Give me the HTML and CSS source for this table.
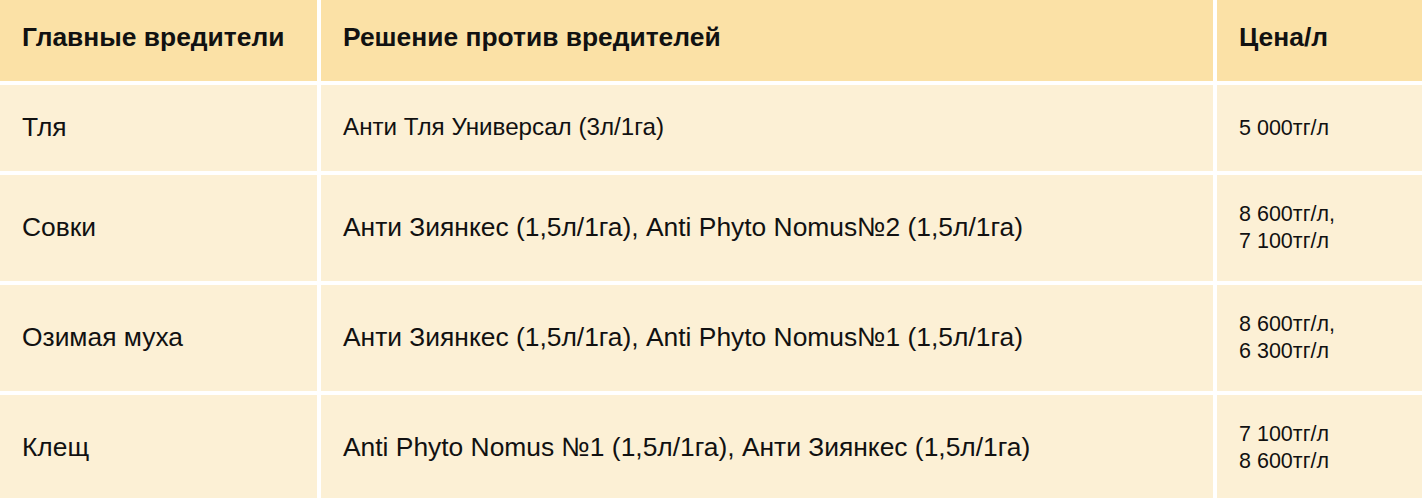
FILE: index.html
```html
<!DOCTYPE html>
<html lang="ru">
<head>
<meta charset="utf-8">
<title>Вредители</title>
<link rel="stylesheet" href="styles.css">
</head>
<body>
<div class="table">
  <div class="cell head">Главные вредители</div>
  <div class="cell head">Решение против вредителей</div>
  <div class="cell head">Цена/л</div>

  <div class="cell">Тля</div>
  <div class="cell small">Анти Тля Универсал (3л/1га)</div>
  <div class="cell price"><span>5 000тг/л</span></div>

  <div class="cell">Совки</div>
  <div class="cell">Анти Зиянкес (1,5л/1га), Anti Phyto Nomus№2 (1,5л/1га)</div>
  <div class="cell price"><span>8 600тг/л,</span><span>7 100тг/л</span></div>

  <div class="cell">Озимая муха</div>
  <div class="cell">Анти Зиянкес (1,5л/1га), Anti Phyto Nomus№1 (1,5л/1га)</div>
  <div class="cell price"><span>8 600тг/л,</span><span>6 300тг/л</span></div>

  <div class="cell">Клещ</div>
  <div class="cell">Anti Phyto Nomus №1 (1,5л/1га), Анти Зиянкес (1,5л/1га)</div>
  <div class="cell price"><span>7 100тг/л</span><span>8 600тг/л</span></div>
</div>
</body>
</html>
```

FILE: styles.css
```css
html, body {
  margin: 0;
  padding: 0;
  background: #ffffff;
}

body {
  font-family: "Liberation Sans", Arial, sans-serif;
  color: #111111;
  overflow: hidden;
}

.table {
  display: grid;
  grid-template-columns: 317px 892px 1fr;
  gap: 4px;
}

.cell {
  display: flex;
  flex-direction: column;
  justify-content: center;
  padding: 25px 22px 27px;
  background: #fcf0d5;
  font-size: 26.4px;
  line-height: 34px;
}

.cell.head {
  background: #fbe1a6;
  font-weight: bold;
  padding: 20px 22px 27px;
}

.cell.small {
  font-size: 24.2px;
}

.cell.price {
  padding: 26px 22px;
  font-size: 21.5px;
  line-height: 27px;
}
```
